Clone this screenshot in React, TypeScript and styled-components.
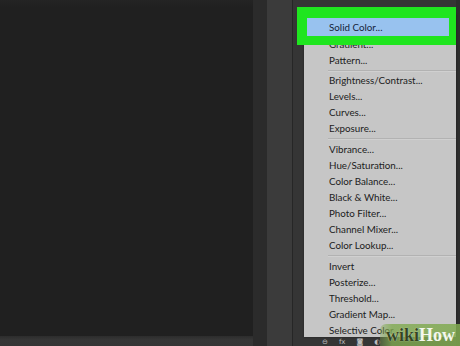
import React from "react";
import styled, { createGlobalStyle } from "styled-components";

const Global = createGlobalStyle`
  html, body { margin: 0; padding: 0; background: #212121; }
  body { width: 460px; height: 346px; overflow: hidden; }
`;

const Screen = styled.div`
  position: relative;
  width: 460px;
  height: 346px;
  display: flex;
  overflow: hidden;
  font-family: Lato, "Open Sans", sans-serif;
`;

const Canvas = styled.div`
  width: 253px;
  display: flex;
  flex-direction: column;
  background: #212121;
`;

const CanvasFill = styled.div`
  flex: 1;
  background: linear-gradient(#242424 0, #202020 8px, #202020 100%);
`;

const CanvasFooter = styled.div`
  height: 10px;
  background: linear-gradient(#2c2c2c, #363636 4px, #353535);
`;

const Strip = styled.div<{ $w: number; $bg: string }>`
  width: ${(p) => p.$w}px;
  background: ${(p) => p.$bg};
`;

const LayersColumn = styled.div`
  flex: 1;
  display: flex;
  flex-direction: column;
  background: #353535;
  padding-left: 11px;
  border-right: 4px solid #2d2d2d;
`;

const Menu = styled.div`
  margin-top: 14px;
  height: 323px;
  background: #c6c6c6;
  padding-top: 4px;
  box-sizing: border-box;
  overflow: hidden;
  display: flex;
  flex-direction: column;
  box-shadow: 0 0 2px rgba(0, 0, 0, 0.4);
`;

const Item = styled.div<{ $selected?: boolean; $h?: number }>`
  height: ${(p) => p.$h ?? 16}px;
  flex: none;
  display: flex;
  align-items: center;
  padding-left: 25px;
  font-size: 9.8px;
  color: ${(p) => (p.$selected ? "#15243a" : "#1c1c1c")};
  background: ${(p) => (p.$selected ? "#98c2ef" : "transparent")};
  white-space: nowrap;
`;

const Sep = styled.div<{ $h: number }>`
  height: ${(p) => p.$h}px;
  flex: none;
  display: flex;
  align-items: center;
  padding-left: 24px;
  &::before {
    content: "";
    flex: 1;
    height: 1px;
    background: #b2b2b2;
    box-shadow: 0 1px 0 #d0d0d0;
  }
`;

const IconRow = styled.div`
  height: 9px;
  display: flex;
  align-items: flex-end;
  gap: 11px;
  padding-left: 18px;
  color: #bdbdbd;
  font-size: 7px;
  line-height: 8px;
  overflow: hidden;
`;

const Icon = styled.span`
  font-family: "DejaVu Sans", sans-serif;
`;

const Highlight = styled.div`
  position: absolute;
  left: 297px;
  top: 7px;
  width: 159px;
  height: 38px;
  box-sizing: border-box;
  border-style: solid;
  border-color: #1fe51f;
  border-width: 11px 7px 9px 10px;
  pointer-events: none;
`;

const Watermark = styled.div`
  position: absolute;
  right: 0;
  bottom: 0;
  width: 80px;
  height: 22px;
  display: flex;
  align-items: flex-end;
  justify-content: flex-end;
  padding-right: 5px;
  padding-bottom: 3px;
  box-sizing: border-box;
  border-top-left-radius: 6px;
  background: linear-gradient(90deg, rgba(128, 170, 80, 0.35), rgba(128, 170, 80, 0.8) 15%, rgba(128, 170, 80, 0.85));
  font-family: "Liberation Serif", "DejaVu Serif", serif;
  font-weight: bold;
  font-size: 18px;
  line-height: 16px;
`;

const Wiki = styled.span`
  color: #34461f;
  text-shadow: 0 0 1px #e8f0d8;
`;

const How = styled.span`
  color: #f4f7ee;
`;

type Entry = { label?: string; sep?: number; selected?: boolean; h?: number };

const entries: Entry[] = [
  { label: "Solid Color...", selected: true, h: 18 },
  { label: "Gradient..." },
  { label: "Pattern..." },
  { sep: 4 },
  { label: "Brightness/Contrast..." },
  { label: "Levels..." },
  { label: "Curves..." },
  { label: "Exposure..." },
  { sep: 5 },
  { label: "Vibrance..." },
  { label: "Hue/Saturation..." },
  { label: "Color Balance..." },
  { label: "Black & White..." },
  { label: "Photo Filter..." },
  { label: "Channel Mixer..." },
  { label: "Color Lookup..." },
  { sep: 5 },
  { label: "Invert" },
  { label: "Posterize..." },
  { label: "Threshold..." },
  { label: "Gradient Map..." },
  { label: "Selective Color..." },
];

export default function App() {
  return (
    <>
      <Global />
      <Screen>
        <Canvas>
          <CanvasFill />
          <CanvasFooter />
        </Canvas>
        <Strip $w={14} $bg="#2b2b2b" />
        <Strip $w={25} $bg="#3b3b3b" />
        <Strip $w={1} $bg="#262626" />
        <LayersColumn>
          <Menu>
            {entries.map((e, i) =>
              e.sep ? (
                <Sep key={i} $h={e.sep} />
              ) : (
                <Item key={i} $selected={e.selected} $h={e.h}>
                  {e.label}
                </Item>
              )
            )}
          </Menu>
          <IconRow>
            <Icon>⊖</Icon>
            <Icon>fx</Icon>
            <Icon>◙</Icon>
            <Icon>◐</Icon>
          </IconRow>
        </LayersColumn>
        <Highlight />
        <Watermark>
          <Wiki>wiki</Wiki>
          <How>How</How>
        </Watermark>
      </Screen>
    </>
  );
}
